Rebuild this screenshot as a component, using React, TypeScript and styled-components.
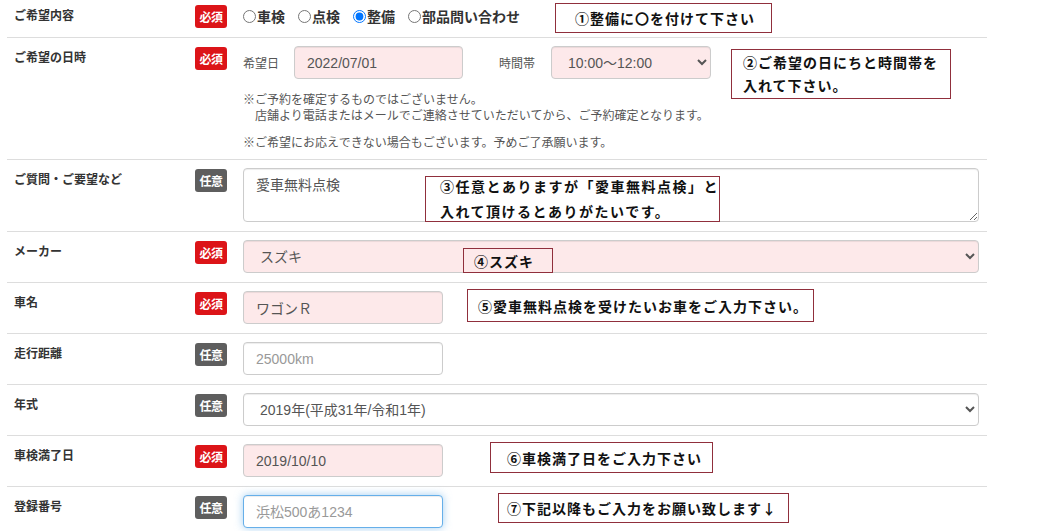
import React from "react";
import styled, { createGlobalStyle, css } from "styled-components";

const GlobalStyle = createGlobalStyle`
  html, body { margin: 0; padding: 0; background: #fff; }
  body {
    font-family: "Liberation Sans", "Noto Sans CJK JP", sans-serif;
    color: #333;
    font-size: 14px;
  }
  * { box-sizing: border-box; }
`;

const Page = styled.div`
  position: relative;
  width: 1057px;
  height: 531px;
  overflow: hidden;
`;

const Form = styled.div`
  width: 980px;
  margin: -4px 0 0 7px;
`;

const Row = styled.div`
  display: grid;
  grid-template-columns: 181px 48px 1fr;
  align-items: start;
  padding: 8px 8px 9px 7px;
  border-bottom: 1px solid #ddd;
`;

const Label = styled.div`
  font-family: "Noto Sans CJK JP", sans-serif;
  font-size: 12px;
  line-height: 22px;
  font-weight: 700;
  color: #333;
`;

const Badge = styled.span<{ $required?: boolean }>`
  display: inline-flex;
  align-items: center;
  justify-content: center;
  width: 32px;
  height: 23px;
  margin-top: 1px;
  border-radius: 3px;
  background: ${(p) => (p.$required ? "#dc1418" : "#5e5e5e")};
  color: #fff;
  font-family: "Noto Sans CJK JP", sans-serif;
  font-size: 12px;
  font-weight: 700;
  letter-spacing: -0.5px;
`;

const Content = styled.div`
  min-width: 0;
`;

const RadioGroup = styled.div`
  display: flex;
  align-items: center;
  height: 24px;
  gap: 13px;
`;

const RadioLabel = styled.label`
  display: inline-flex;
  align-items: center;
  font-family: "Noto Sans CJK JP", sans-serif;
  font-size: 14px;
  font-weight: 700;
  color: #333;
  input {
    width: 13px;
    height: 13px;
    margin: 0 1px 0 0;
  }
`;

const Inline = styled.div`
  display: flex;
  align-items: center;
`;

const SubLabel = styled.span<{ $w: number; $ml?: number }>`
  width: ${(p) => p.$w}px;
  margin-left: ${(p) => p.$ml ?? 0}px;
  font-family: "Noto Sans CJK JP", sans-serif;
  font-size: 12px;
  color: #555;
`;

const fieldBase = css<{ $pink?: boolean; $w?: number; $focus?: boolean }>`
  display: block;
  height: 33px;
  width: ${(p) => (p.$w ? `${p.$w}px` : "100%")};
  padding: 6px 12px;
  font-family: "Liberation Sans", "Noto Sans CJK JP", sans-serif;
  font-size: 14px;
  color: #555;
  background-color: ${(p) => (p.$pink ? "#fde9ea" : "#fff")};
  border: 1px solid ${(p) => (p.$focus ? "#66afe9" : "#ccc")};
  border-radius: 4px;
  box-shadow: ${(p) =>
    p.$focus
      ? "inset 0 1px 1px rgba(0,0,0,.075), 0 0 8px rgba(102,175,233,.6)"
      : "inset 0 1px 1px rgba(0,0,0,.075)"};
  outline: none;
  &::placeholder { color: #999; }
`;

const TextInput = styled.input<{ $pink?: boolean; $w?: number; $focus?: boolean }>`
  ${fieldBase}
`;

const Select = styled.select<{ $pink?: boolean; $w?: number }>`
  ${fieldBase}
  padding: 6px 8px 6px 12px;
`;

const TextArea = styled.textarea`
  display: block;
  width: 100%;
  height: 54px;
  padding: 6px 12px;
  font-family: "Liberation Sans", "Noto Sans CJK JP", sans-serif;
  font-size: 14px;
  line-height: 20px;
  color: #555;
  background: #fff;
  border: 1px solid #ccc;
  border-radius: 4px;
  box-shadow: inset 0 1px 1px rgba(0,0,0,.075);
  outline: none;
`;

const Notes = styled.div`
  margin-top: 12px;
  font-family: "Noto Sans CJK JP", sans-serif;
  font-size: 12px;
  line-height: 16px;
  color: #555;
  & + & { margin-top: 11px; }
`;

const Annot = styled.div<{ $x: number; $y: number; $w: number; $h: number; $pl: number; $lh?: number; $ls?: number }>`
  position: absolute;
  left: ${(p) => p.$x}px;
  top: ${(p) => p.$y}px;
  width: ${(p) => p.$w}px;
  height: ${(p) => p.$h}px;
  padding-left: ${(p) => p.$pl}px;
  border: 1px solid #902f3c;
  display: flex;
  align-items: center;
  white-space: pre-line;
  font-family: "Noto Sans CJK JP", sans-serif;
  font-weight: 700;
  font-size: 14px;
  line-height: ${(p) => p.$lh ?? 20}px;
  letter-spacing: ${(p) => p.$ls ?? 1}px;
  color: #111;
`;

export default function App() {
  return (
    <Page>
      <GlobalStyle />
      <Form>
        <Row>
          <Label>ご希望内容</Label>
          <div><Badge $required>必須</Badge></div>
          <Content>
            <RadioGroup>
              <RadioLabel><input type="radio" name="k" />車検</RadioLabel>
              <RadioLabel><input type="radio" name="k" />点検</RadioLabel>
              <RadioLabel><input type="radio" name="k" defaultChecked />整備</RadioLabel>
              <RadioLabel><input type="radio" name="k" />部品問い合わせ</RadioLabel>
            </RadioGroup>
          </Content>
        </Row>
        <Row>
          <Label>ご希望の日時</Label>
          <div><Badge $required>必須</Badge></div>
          <Content>
            <Inline>
              <SubLabel $w={51}>希望日</SubLabel>
              <TextInput $pink $w={169} defaultValue="2022/07/01" />
              <SubLabel $w={52} $ml={36}>時間帯</SubLabel>
              <Select $pink $w={160} defaultValue="10:00～12:00">
                <option>10:00～12:00</option>
              </Select>
            </Inline>
            <Notes>
              {"※ご予約を確定するものではございません。"}
              <br />
              {"\u3000店舗より電話またはメールでご連絡させていただいてから、ご予約確定となります。"}
            </Notes>
            <Notes>※ご希望にお応えできない場合もございます。予めご了承願います。</Notes>
          </Content>
        </Row>
        <Row>
          <Label>ご質問・ご要望など</Label>
          <div><Badge>任意</Badge></div>
          <Content>
            <TextArea defaultValue="愛車無料点検" />
          </Content>
        </Row>
        <Row>
          <Label>メーカー</Label>
          <div><Badge $required>必須</Badge></div>
          <Content>
            <Select $pink defaultValue="スズキ">
              <option>スズキ</option>
            </Select>
          </Content>
        </Row>
        <Row>
          <Label>車名</Label>
          <div><Badge $required>必須</Badge></div>
          <Content>
            <TextInput $pink $w={200} defaultValue="ワゴンＲ" />
          </Content>
        </Row>
        <Row>
          <Label>走行距離</Label>
          <div><Badge>任意</Badge></div>
          <Content>
            <TextInput $w={200} placeholder="25000km" />
          </Content>
        </Row>
        <Row>
          <Label>年式</Label>
          <div><Badge>任意</Badge></div>
          <Content>
            <Select defaultValue="2019年(平成31年/令和1年)">
              <option>2019年(平成31年/令和1年)</option>
            </Select>
          </Content>
        </Row>
        <Row>
          <Label>車検満了日</Label>
          <div><Badge $required>必須</Badge></div>
          <Content>
            <TextInput $pink $w={200} defaultValue="2019/10/10" />
          </Content>
        </Row>
        <Row>
          <Label>登録番号</Label>
          <div><Badge>任意</Badge></div>
          <Content>
            <TextInput $w={200} $focus placeholder="浜松500あ1234" />
          </Content>
        </Row>
      </Form>

      <Annot $x={555} $y={3} $w={217} $h={30} $pl={19}>①整備に〇を付けて下さい</Annot>
      <Annot $x={731} $y={49} $w={220} $h={50} $pl={11} $lh={23}>{"②ご希望の日にちと時間帯を\n入れて下さい。"}</Annot>
      <Annot $x={425} $y={176} $w={295} $h={46} $pl={14} $lh={25} $ls={1.5}>{"③任意とありますが「愛車無料点検」と\n入れて頂けるとありがたいです。"}</Annot>
      <Annot $x={463} $y={248} $w={90} $h={25} $pl={10}>④スズキ</Annot>
      <Annot $x={467} $y={289} $w={347} $h={33} $pl={10}>⑤愛車無料点検を受けたいお車をご入力下さい。</Annot>
      <Annot $x={490} $y={442} $w={223} $h={31} $pl={16}>⑥車検満了日をご入力下さい</Annot>
      <Annot $x={498} $y={493} $w={291} $h={30} $pl={8}>⑦下記以降もご入力をお願い致します↓</Annot>
    </Page>
  );
}
